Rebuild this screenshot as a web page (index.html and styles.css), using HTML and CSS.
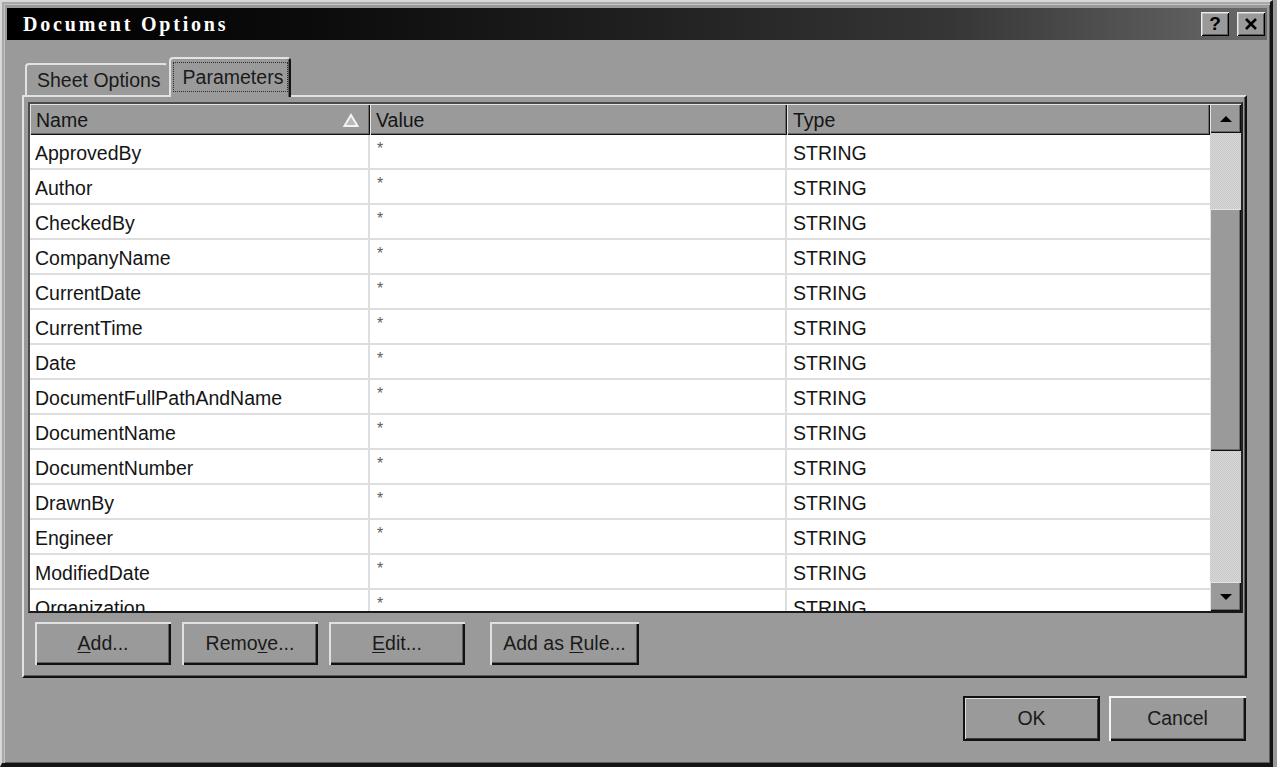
FILE: index.html
```html
<!DOCTYPE html>
<html lang="en">
<head>
  <meta charset="UTF-8" />
  <title>Document Options</title>
  <link rel="stylesheet" href="styles.css">
</head>
<body>
  <div class="window">
    <div class="titlebar">
      <span class="title">Document Options</span>
      <div class="title-btns">
        <button class="tb tb-help">?</button>
        <button class="tb" aria-label="Close">
          <svg width="14" height="12" viewBox="0 0 14 12"><path d="M2 1 L12 11 M12 1 L2 11" stroke="#000" stroke-width="2.6" fill="none"/></svg>
        </button>
      </div>
    </div>

    <div class="content">
      <div class="tabs">
        <div class="tab">Sheet Options</div>
        <div class="tab active"><span class="focus">Parameters</span></div>
      </div>

      <div class="panel">
        <div class="listview">
          <div class="lv-main">
            <div class="lv-header">
              <div class="hcell hcell-sort">Name
                <svg width="16" height="15" viewBox="0 0 16 15"><polygon points="8,2 14.5,13 1.5,13" fill="#b8b8b8" stroke="#f2f2f2" stroke-width="2"/></svg>
              </div>
              <div class="hcell">Value</div>
              <div class="hcell">Type</div>
            </div>
            <div class="lv-rows">
              <div class="row"><div class="cell">ApprovedBy</div><div class="cell val">*</div><div class="cell">STRING</div></div>
              <div class="row"><div class="cell">Author</div><div class="cell val">*</div><div class="cell">STRING</div></div>
              <div class="row"><div class="cell">CheckedBy</div><div class="cell val">*</div><div class="cell">STRING</div></div>
              <div class="row"><div class="cell">CompanyName</div><div class="cell val">*</div><div class="cell">STRING</div></div>
              <div class="row"><div class="cell">CurrentDate</div><div class="cell val">*</div><div class="cell">STRING</div></div>
              <div class="row"><div class="cell">CurrentTime</div><div class="cell val">*</div><div class="cell">STRING</div></div>
              <div class="row"><div class="cell">Date</div><div class="cell val">*</div><div class="cell">STRING</div></div>
              <div class="row"><div class="cell">DocumentFullPathAndName</div><div class="cell val">*</div><div class="cell">STRING</div></div>
              <div class="row"><div class="cell">DocumentName</div><div class="cell val">*</div><div class="cell">STRING</div></div>
              <div class="row"><div class="cell">DocumentNumber</div><div class="cell val">*</div><div class="cell">STRING</div></div>
              <div class="row"><div class="cell">DrawnBy</div><div class="cell val">*</div><div class="cell">STRING</div></div>
              <div class="row"><div class="cell">Engineer</div><div class="cell val">*</div><div class="cell">STRING</div></div>
              <div class="row"><div class="cell">ModifiedDate</div><div class="cell val">*</div><div class="cell">STRING</div></div>
              <div class="row"><div class="cell">Organization</div><div class="cell val">*</div><div class="cell">STRING</div></div>
            </div>
          </div>
          <div class="scrollbar">
            <div class="sb-btn">
              <svg width="14" height="8" viewBox="0 0 14 8"><polygon points="7,1 13,7 1,7" fill="#000"/></svg>
            </div>
            <div class="sb-track sb-track-top"></div>
            <div class="sb-thumb"></div>
            <div class="sb-track sb-track-bottom"></div>
            <div class="sb-btn">
              <svg width="14" height="8" viewBox="0 0 14 8"><polygon points="1,1 13,1 7,7" fill="#000"/></svg>
            </div>
          </div>
        </div>

        <div class="panel-buttons">
          <button class="btn"><u>A</u>dd...</button>
          <button class="btn">Remo<u>v</u>e...</button>
          <button class="btn"><u>E</u>dit...</button>
          <button class="btn btn-rule">Add as <u>R</u>ule...</button>
        </div>
      </div>

      <div class="dialog-buttons">
        <button class="btn btn-dlg btn-default">OK</button>
        <button class="btn btn-dlg btn-cancel">Cancel</button>
      </div>
    </div>
  </div>
</body>
</html>
```

FILE: styles.css
```css
* {
  margin: 0; padding: 0; box-sizing: border-box;
}
body {
  background: #9a9a9a;
  font-family: "Liberation Sans", Arial, sans-serif;
  font-size: 19.5px;
  color: #151515;
  width: 1277px;
  height: 767px;
  overflow: hidden;
}

.window {
  width: 1273px;
  height: 767px;
  display: flex;
  flex-direction: column;
  background: #9a9a9a;
  border-top: 2px solid #d8d8d8;
  border-left: 2px solid #d8d8d8;
  border-right: 3px solid #141414;
  border-bottom: 4px solid #141414;
  padding: 6px 3px 0 5px;
  box-shadow: inset 2px 2px 0 #a8a8a8, inset 3px 3px 0 #c4c4c4, inset -1px -1px 0 #5c5c5c;
}

.titlebar {
  height: 32px;
  flex: none;
  display: flex;
  align-items: center;
  justify-content: space-between;
  padding: 0 2px 0 16px;
  background: linear-gradient(to right, #000 0%, #0c0c0c 25%, #1e1e1e 48%, #363636 75%, #555 90%, #6a6a6a 100%);
}

.title {
  color: #fff;
  font-family: "Liberation Serif", serif;
  font-weight: bold;
  font-size: 20px;
  letter-spacing: 2.8px;
}

.title-btns {
  display: flex;
  gap: 8px;
}

.tb {
  width: 28px;
  height: 24px;
  border: none;
  background: #9a9a9a;
  display: flex;
  align-items: center;
  justify-content: center;
  font-family: "Liberation Sans", Arial, sans-serif;
  font-weight: bold;
  font-size: 19px;
  color: #000;
  box-shadow: inset 1px 1px 0 #ececec, inset -1px -1px 0 #000, inset 2px 2px 0 #bdbdbd, inset -2px -2px 0 #5a5a5a;
}

.content {
  flex: 1;
  display: flex;
  flex-direction: column;
  padding: 17px 20px 0 15px;
}

/* tabs */
.tabs {
  display: flex;
  align-items: flex-end;
  height: 38px;
  flex: none;
  padding-left: 3px;
}

.tab {
  height: 32px;
  display: flex;
  align-items: center;
  padding: 0 5px 0 10px;
  background: #9a9a9a;
  border-top: 2px solid #e2e2e2;
  border-left: 2px solid #e2e2e2;
  border-right: 2px solid #9a9a9a;
  border-radius: 4px 4px 0 0;
  color: #1a1a1a;
}

.tab.active {
  height: 40px;
  margin-bottom: -2px;
  margin-left: 1px;
  padding: 3px 1px 5px 2px;
  border-right: 2px solid #111;
  box-shadow: inset -1px 0 0 #5c5c5c;
  position: relative;
  z-index: 2;
}

.focus {
  height: 30px;
  display: flex;
  align-items: center;
  padding: 0 4px 0 9px;
  border: 1px dotted #2a2a2a;
}

/* panel */
.panel {
  height: 583px;
  flex: none;
  display: flex;
  flex-direction: column;
  border: 2px solid;
  border-color: #e2e2e2 #111 #111 #e2e2e2;
  box-shadow: inset -1px -1px 0 #5c5c5c;
  padding: 5px 2px 11px 4px;
}

.listview {
  height: 511px;
  flex: none;
  display: flex;
  border: 2px solid;
  border-color: #4a4a4a #222 #1a1a1a #4a4a4a;
  background: #fff;
}

.lv-main {
  flex: 1;
  display: flex;
  flex-direction: column;
  overflow: hidden;
}

.lv-header {
  height: 31px;
  flex: none;
  display: grid;
  grid-template-columns: 340px 417px 1fr;
  background: #9a9a9a;
}

.hcell {
  display: flex;
  align-items: center;
  padding-left: 6px;
  padding-top: 1px;
  color: #151515;
  box-shadow: inset 1px 1px 0 #e4e4e4, inset -1px -1px 0 #111, inset -2px -2px 0 #6a6a6a;
}

.hcell-sort {
  justify-content: space-between;
  padding-right: 11px;
}

.lv-rows {
  flex: 1;
  overflow: hidden;
}

.row {
  height: 35px;
  display: grid;
  grid-template-columns: 340px 417px 1fr;
  border-bottom: 2px solid #dedede;
}

.cell {
  display: flex;
  align-items: center;
  padding-left: 6px;
  padding-top: 3px;
  border-right: 2px solid #dedede;
  white-space: nowrap;
}

.cell:first-child {
  padding-left: 5px;
}

.cell:last-child {
  border-right: none;
  padding-left: 6px;
}

.cell.val {
  font-size: 16px;
  color: #606060;
  padding-left: 7px;
  padding-top: 0;
  padding-bottom: 5px;
}

/* scrollbar */
.scrollbar {
  width: 31px;
  flex: none;
  display: flex;
  flex-direction: column;
  background: #d0d0d0;
}

.sb-btn {
  height: 29px;
  flex: none;
  display: flex;
  align-items: center;
  justify-content: center;
  background: #9a9a9a;
  box-shadow: inset 1px 1px 0 #e4e4e4, inset -1px -1px 0 #111, inset -2px -2px 0 #6a6a6a;
}

.sb-track {
  background: repeating-conic-gradient(#c6c6c6 0% 25%, #dadada 0% 50%) 0 0 / 2px 2px;
}

.sb-track-top {
  height: 76px;
  flex: none;
}

.sb-track-bottom {
  flex: 1;
}

.sb-thumb {
  height: 242px;
  flex: none;
  background: #9a9a9a;
  box-shadow: inset 1px 1px 0 #e4e4e4, inset -1px -1px 0 #111, inset -2px -2px 0 #6a6a6a;
}

/* buttons */
.panel-buttons {
  display: flex;
  gap: 11px;
  margin-top: 9px;
  padding-left: 7px;
}

.btn {
  width: 136px;
  height: 43px;
  border: none;
  background: #9a9a9a;
  font-family: "Liberation Sans", Arial, sans-serif;
  font-size: 19.5px;
  color: #1a1a1a;
  box-shadow: inset 2px 2px 0 #e0e0e0, inset -2px -2px 0 #111, inset -3px -3px 0 #5e5e5e;
}

.btn u {
  text-underline-offset: 2px;
}

.btn-rule {
  width: 149px;
  margin-left: 14px;
}

.dialog-buttons {
  display: flex;
  justify-content: flex-end;
  gap: 9px;
  margin-top: 18px;
  padding-right: 1px;
}

.btn-dlg {
  width: 137px;
  height: 45px;
}

.btn-default {
  border: 2px solid #111;
  box-shadow: inset 1px 1px 0 #dcdcdc, inset -1px -1px 0 #3a3a3a;
}

.btn-cancel {
  box-shadow: inset 2px 2px 0 #f4f4f4, inset -2px -2px 0 #111, inset -3px -3px 0 #5e5e5e;
}
```
